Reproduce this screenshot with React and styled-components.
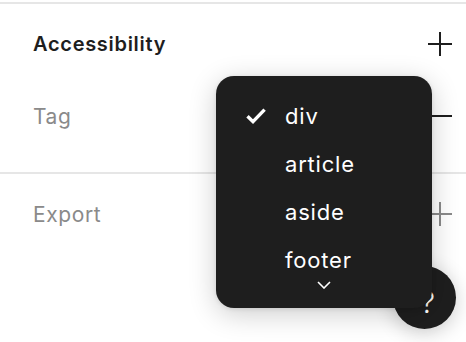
import React from "react";
import styled, { createGlobalStyle } from "styled-components";

const Global = createGlobalStyle`
  html, body { margin: 0; padding: 0; background: #ffffff; }
  body { font-family: Inter, "Noto Sans", sans-serif; -webkit-font-smoothing: antialiased; }
  #root { width: 466px; height: 342px; overflow: hidden; }
`;

const Page = styled.div`
  position: relative;
  width: 466px;
  height: 342px;
  padding-top: 2px;
  box-sizing: border-box;
  background: #fff;
`;

const Section = styled.section`
  border-top: 2px solid #e6e6e6;
  padding-bottom: ${(p) => p.$pb || 0}px;
`;

const Row = styled.div`
  display: flex;
  align-items: center;
  justify-content: space-between;
  height: ${(p) => p.$h}px;
  padding: 0 14px 0 33px;
`;

const Label = styled.span`
  font-size: ${(p) => (p.$strong ? 20 : 21)}px;
  font-weight: ${(p) => (p.$strong ? 600 : 400)};
  color: ${(p) => (p.$strong ? "#1e1e1e" : "#8a8a8a")};
  letter-spacing: ${(p) => (p.$strong ? 0.7 : 0.6)}px;
`;

const IconBtn = styled.span`
  display: flex;
  width: 24px;
  height: 24px;
  color: ${(p) => (p.$muted ? "#8a8a8a" : "#1e1e1e")};
`;

const Menu = styled.div`
  position: absolute;
  left: 216px;
  top: 76px;
  width: 216px;
  height: 232px;
  box-sizing: border-box;
  padding-top: 16px;
  background: #1e1e1e;
  border-radius: 18px;
  box-shadow: 0 6px 28px rgba(0, 0, 0, 0.2), 0 1px 4px rgba(0, 0, 0, 0.1);
  display: flex;
  flex-direction: column;
  z-index: 2;
`;

const Item = styled.div`
  display: grid;
  grid-template-columns: 69px 1fr;
  align-items: center;
  height: 48px;
  color: #ffffff;
  font-size: 22px;
  font-weight: 400;
  letter-spacing: 0.8px;
`;

const CheckCell = styled.span`
  display: flex;
  padding-left: 30px;
`;

const More = styled.div`
  display: flex;
  justify-content: center;
  align-items: center;
  height: 12px;
  margin-top: -5px;
  color: #fff;
`;

const Help = styled.div`
  position: absolute;
  left: 393px;
  top: 266px;
  width: 63px;
  height: 63px;
  border-radius: 50%;
  background: #1e1e1e;
  color: #fff;
  display: flex;
  align-items: center;
  justify-content: center;
  font-size: 30px;
  font-weight: 300;
  box-shadow: 0 4px 20px rgba(0, 0, 0, 0.2);
  z-index: 1;
`;

const HelpMark = styled.span`
  padding-left: 6px;
  padding-top: 8px;
`;

const Plus = () => (
  <svg width="24" height="24" viewBox="0 0 24 24" fill="none" stroke="currentColor" strokeWidth="2">
    <path d="M12 0v24M0 12h24" />
  </svg>
);

const Minus = () => (
  <svg width="24" height="24" viewBox="0 0 24 24" fill="none" stroke="currentColor" strokeWidth="2">
    <path d="M0 12h24" />
  </svg>
);

const Check = () => (
  <svg width="20" height="16" viewBox="0 0 20 16" fill="none" stroke="#fff" strokeWidth="3.4">
    <path d="M1.5 8.2L7 13.6L18.6 1.6" />
  </svg>
);

const Chevron = () => (
  <svg width="14" height="8" viewBox="0 0 14 8" fill="none" stroke="#fff" strokeWidth="1.6">
    <path d="M1 1l6 6 6-6" />
  </svg>
);

const tags = ["div", "article", "aside", "footer"];

export default function App() {
  return (
    <>
      <Global />
      <Page>
        <Section $pb={24}>
          <Row $h={80}>
            <Label $strong>Accessibility</Label>
            <IconBtn><Plus /></IconBtn>
          </Row>
          <Row $h={64}>
            <Label>Tag</Label>
            <IconBtn><Minus /></IconBtn>
          </Row>
        </Section>
        <Section>
          <Row $h={80}>
            <Label>Export</Label>
            <IconBtn $muted><Plus /></IconBtn>
          </Row>
        </Section>
        <Menu>
          {tags.map((t, i) => (
            <Item key={t}>
              <CheckCell>{i === 0 ? <Check /> : null}</CheckCell>
              <span>{t}</span>
            </Item>
          ))}
          <More><Chevron /></More>
        </Menu>
        <Help><HelpMark>?</HelpMark></Help>
      </Page>
    </>
  );
}
